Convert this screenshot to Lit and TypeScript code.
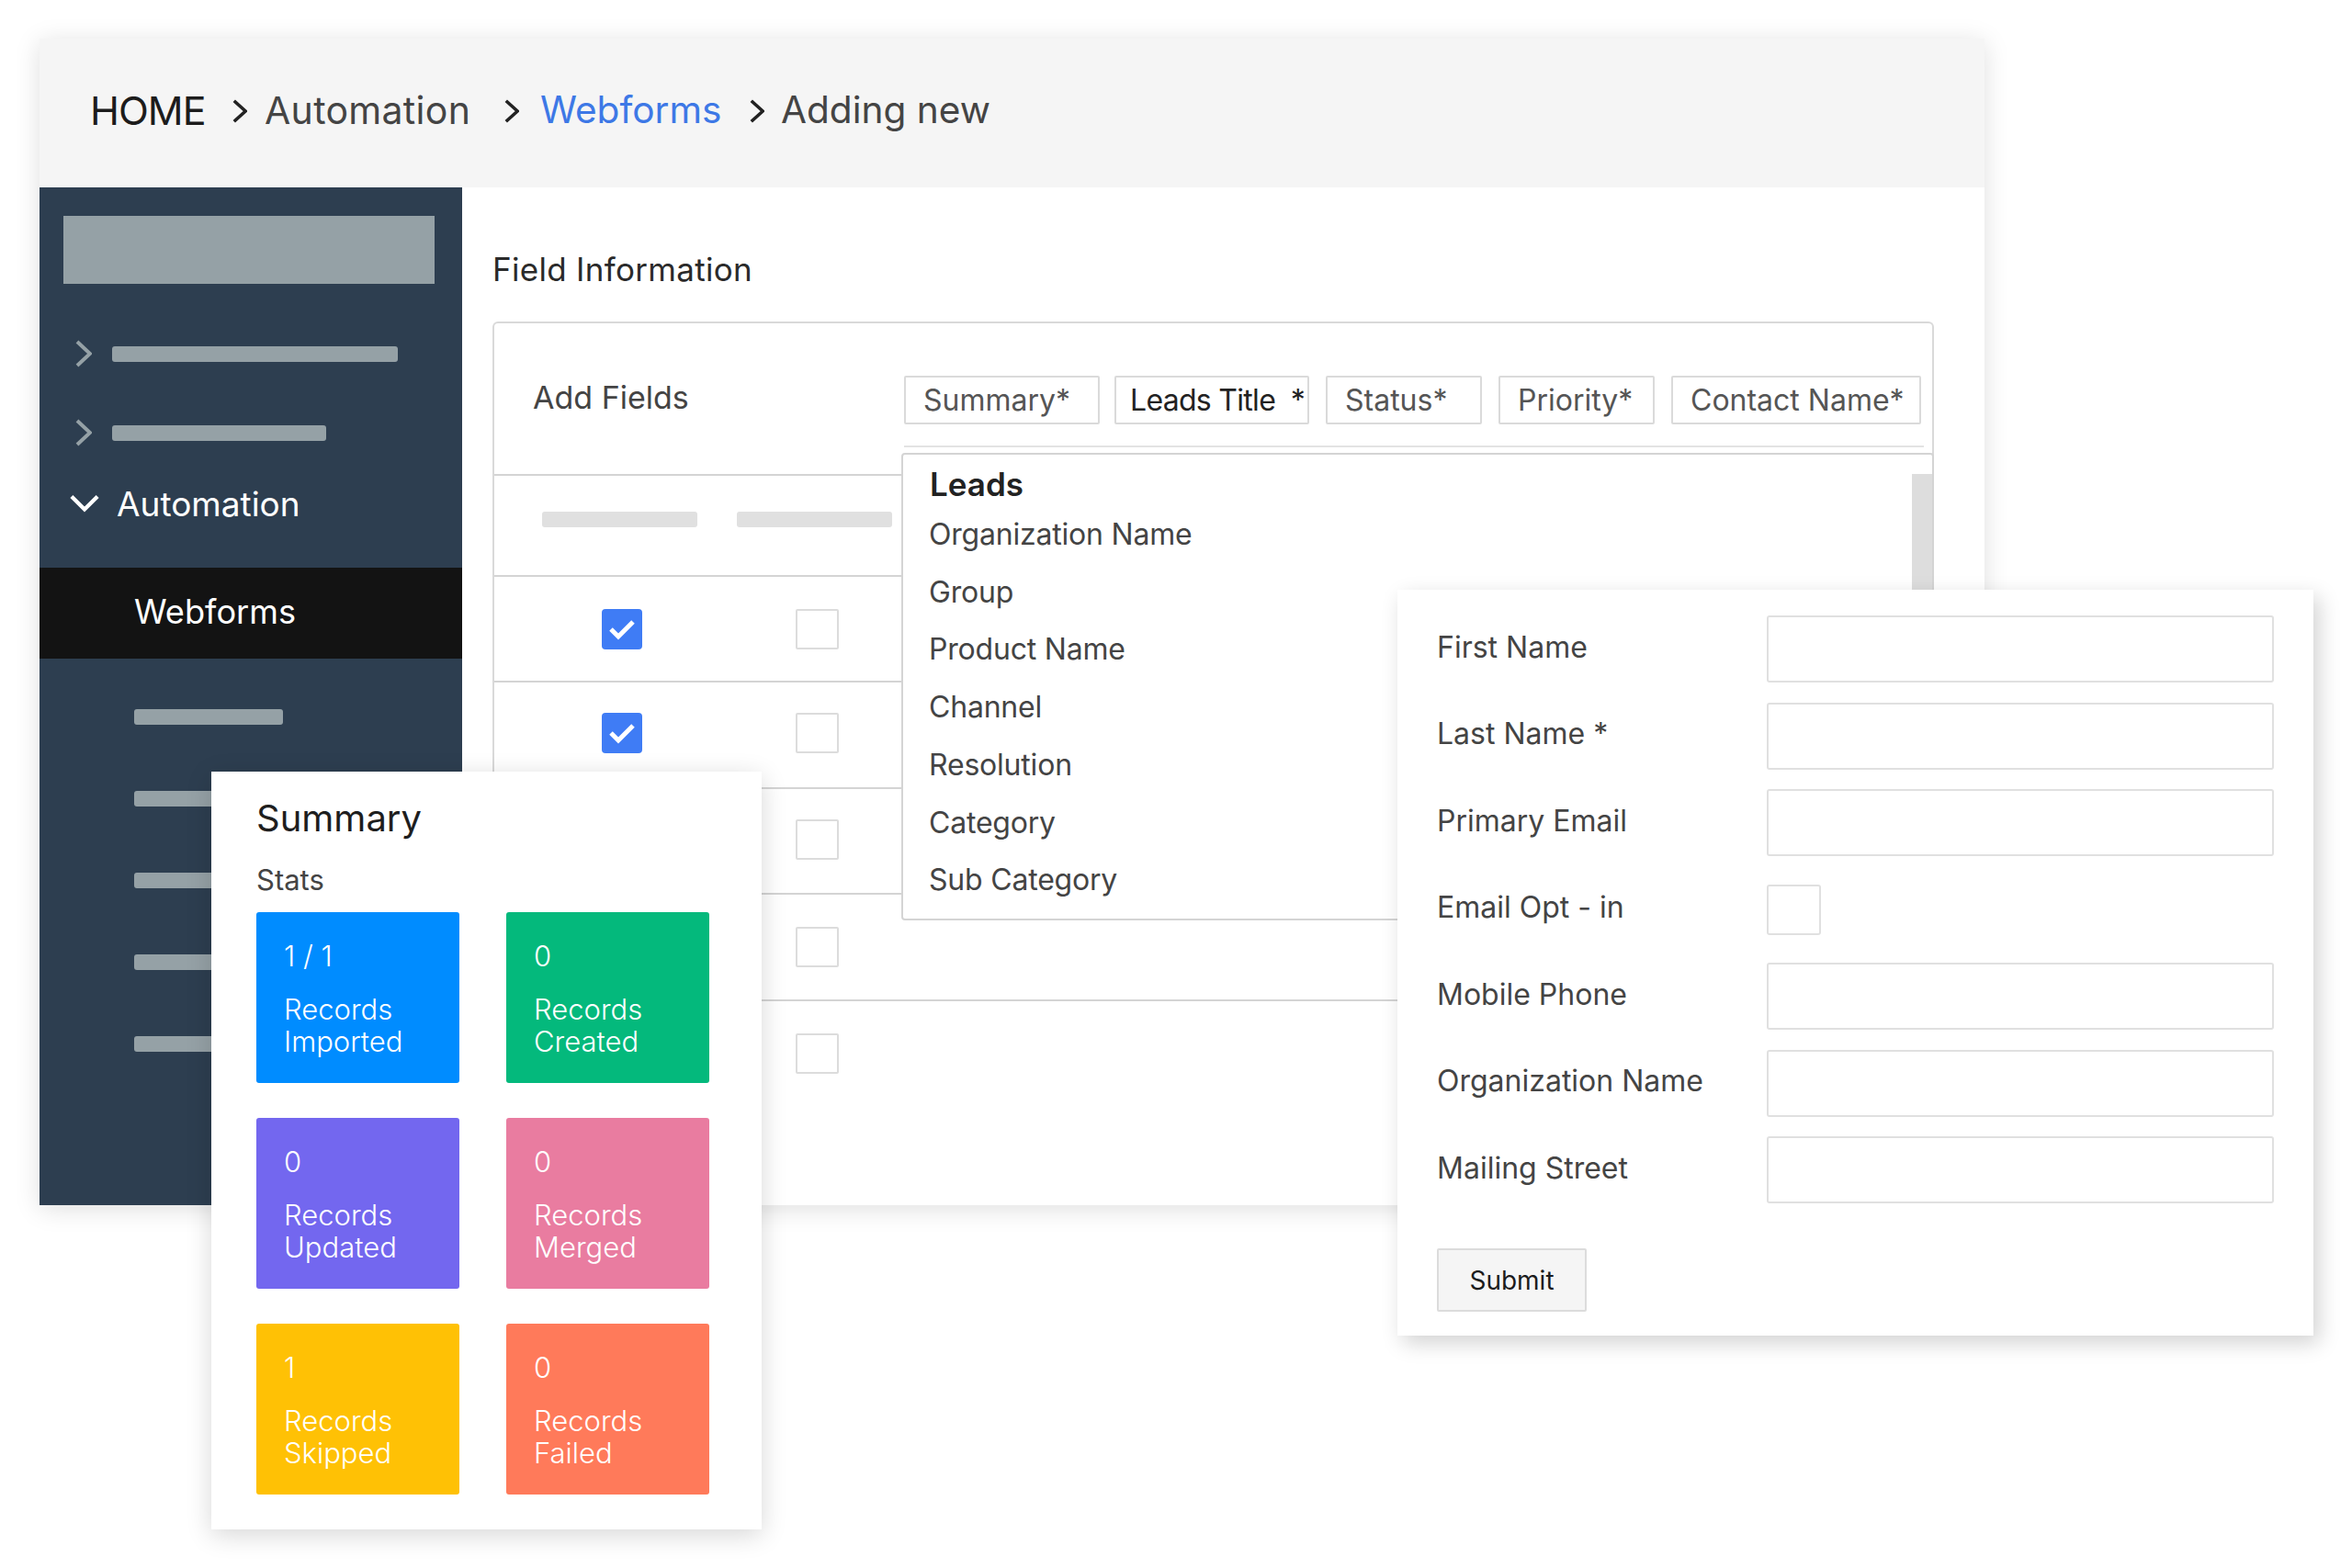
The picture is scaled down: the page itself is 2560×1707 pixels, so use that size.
import { LitElement, html, css, svg } from 'lit';
import { customElement } from 'lit/decorators.js';

const chevronRight = svg`<polyline points="2,2 16,15 2,28" fill="none" stroke="currentColor" stroke-width="4"/>`;
const chevronDown = svg`<polyline points="2,2 17,17 32,2" fill="none" stroke="currentColor" stroke-width="4.5"/>`;

const crumbs = [
  { label: 'HOME', cls: 'home' },
  { label: 'Automation', cls: 'a' },
  { label: 'Webforms', cls: 'w' },
  { label: 'Adding new', cls: 'n' },
];

const chips = [
  { label: 'Summary*', w: 213 },
  { label: 'Leads Title  *', w: 212, dark: true },
  { label: 'Status*', w: 170 },
  { label: 'Priority*', w: 170 },
  { label: 'Contact Name*', w: 272 },
];

const leadFields = ['Organization Name', 'Group', 'Product Name', 'Channel', 'Resolution', 'Category', 'Sub Category'];

const rows = [
  { checked: true, h: 115, pb: 0 },
  { checked: true, h: 116, pb: 5 },
  { checked: false, h: 115, pb: 3 },
  { checked: false, h: 116, pb: 0 },
  { checked: false, h: 125, pb: 10 },
];

const tiles = [
  { value: '1 / 1', a: 'Records', b: 'Imported', color: '#008cff' },
  { value: '0', a: 'Records', b: 'Created', color: '#04b97c' },
  { value: '0', a: 'Records', b: 'Updated', color: '#7367ef' },
  { value: '0', a: 'Records', b: 'Merged', color: '#e97ca0' },
  { value: '1', a: 'Records', b: 'Skipped', color: '#ffc105' },
  { value: '0', a: 'Records', b: 'Failed', color: '#ff7a5a' },
];

const formFields = [
  { label: 'First Name' },
  { label: 'Last Name *' },
  { label: 'Primary Email' },
  { label: 'Email Opt - in', box: true },
  { label: 'Mobile Phone' },
  { label: 'Organization Name' },
  { label: 'Mailing Street' },
];

@customElement('app-root')
export class AppRoot extends LitElement {
  static styles = css`
    :host {
      display: block;
      position: relative;
      width: 2560px;
      height: 1707px;
      overflow: hidden;
      background: #fff;
      font-family: Inter, "Liberation Sans", sans-serif;
      color: #444;
    }

    .window {
      position: absolute;
      left: 43px;
      top: 42px;
      width: 2117px;
      height: 1270px;
      display: flex;
      flex-direction: column;
      background: #fff;
      box-shadow: 0 4px 26px rgba(0, 0, 0, 0.13);
    }

    .crumbs {
      position: relative;
      height: 162px;
      flex: none;
      background: #f5f5f5;
      font-size: 40.6px;
      color: #444;
    }
    .crumb { position: absolute; top: 54px; line-height: 48px; white-space: nowrap; }
    .crumbs svg { position: absolute; top: 66px; width: 16px; height: 26px; color: #222; }
    .home { left: 55px; color: #1c1c1c; font-size: 43px; letter-spacing: -1px; }
    .a { left: 245px; font-size: 41px; letter-spacing: 0.3px; }
    .w { left: 545px; color: #3d78e6; }
    .n { left: 807px; }

    .body { flex: 1; display: flex; min-height: 0; }

    .sidebar {
      width: 460px;
      flex: none;
      background: #2d3e50;
      padding-top: 31px;
      box-sizing: border-box;
      color: #fff;
    }
    .logo { width: 404px; height: 74px; margin-left: 26px; background: #95a1a6; }
    .nav-row {
      display: flex;
      align-items: center;
      height: 30px;
      padding-left: 39px;
      color: #95a1a6;
    }
    .nav-row svg { width: 18px; height: 30px; margin-right: 22px; flex: none; }
    .nav-row.first { margin-top: 61px; }
    .nav-row.second { margin-top: 56px; }
    .bar { height: 17px; border-radius: 3px; background: #95a1a6; }
    .open {
      display: flex;
      align-items: center;
      height: 40px;
      margin-top: 42px;
      padding-left: 33px;
      font-size: 37px;
      color: #fff;
    }
    .open svg { width: 32px; height: 20px; margin-right: 19px; }
    .active {
      height: 99px;
      margin-top: 50px;
      padding-left: 103px;
      line-height: 96px;
      background: #131313;
      font-size: 36.2px;
    }
    .subs { display: flex; flex-direction: column; gap: 72px; padding: 55px 0 0 103px; }
    .subs .bar { width: 162px; }
    .subs .bar.long { width: 200px; }

    .main { flex: 1; padding: 69px 0 0 33px; }
    h2 {
      margin: 0;
      font-size: 35px;
      line-height: 41px;
      font-weight: 400;
      color: #2a2a2a;
      letter-spacing: 0.3px;
    }
    .panel {
      position: relative;
      width: 1569px;
      height: 863px;
      margin-top: 36px;
      box-sizing: border-box;
      border: 2px solid #d9d9d9;
      border-bottom: none;
      border-radius: 6px 6px 0 0;
    }
    .panel-top {
      display: flex;
      height: 166px;
      box-sizing: border-box;
      padding: 57px 0 0 42px;
      border-bottom: 2px solid #d4d4d4;
    }
    .panel-top .title {
      width: 404px;
      flex: none;
      margin-top: 1px;
      font-size: 34px;
      line-height: 46px;
      color: #444;
    }
    .chips {
      display: flex;
      gap: 18px;
      width: 1110px;
      height: 76px;
      border-bottom: 2px solid #e3e3e3;
    }
    .chip {
      height: 53px;
      box-sizing: border-box;
      padding-left: 19px;
      border: 2px solid #dadada;
      border-radius: 2px;
      font-size: 32px;
      line-height: 49px;
      white-space: pre;
      color: #555;
    }
    .chip:first-child { margin-right: -2px; }
    .chip.dark { padding-left: 15px; color: #222; letter-spacing: -0.7px; }

    .col-head { display: flex; gap: 43px; height: 108px; padding: 39px 0 0 52px; box-sizing: border-box; }
    .col-head .bar { width: 169px; background: #e0e0e0; }
    .row {
      display: grid;
      grid-template-columns: 213px 213px;
      align-items: center;
      justify-items: center;
      box-sizing: border-box;
      padding-left: 32px;
      border-top: 2px solid #d4d4d4;
    }
    .row:last-of-type { border-bottom: 2px solid #d4d4d4; }
    .check {
      width: 44px;
      height: 44px;
      border-radius: 4px;
      background: #3f7cf5;
      display: flex;
      align-items: center;
      justify-content: center;
    }
    .check svg { width: 30px; height: 24px; }
    .box {
      width: 47px;
      height: 44px;
      box-sizing: border-box;
      border: 2px solid #dcdcdc;
      border-radius: 2px;
      background: #fff;
    }

    .dropdown {
      position: absolute;
      left: 443px;
      top: 141px;
      width: 1124px;
      height: 509px;
      box-sizing: border-box;
      padding: 10px 0 0 28px;
      background: #fff;
      border: 2px solid #d4d4d4;
      border-radius: 4px;
    }
    .dropdown h3 {
      margin: 0 0 2px 1px;
      font-size: 35px;
      line-height: 44px;
      font-weight: 600;
      color: #222;
    }
    .dropdown div.item {
      font-size: 32px;
      line-height: 62.7px;
      letter-spacing: -0.2px;
      color: #444;
    }
    .scroll {
      position: absolute;
      right: 0;
      top: 21px;
      width: 22px;
      height: 160px;
      background: #ddd;
    }

    .summary {
      position: absolute;
      left: 230px;
      top: 840px;
      width: 599px;
      height: 825px;
      box-sizing: border-box;
      padding: 27px 0 0 49px;
      background: #fff;
      box-shadow: 0 6px 26px rgba(0, 0, 0, 0.16);
    }
    .summary h2 { font-size: 40px; line-height: 48px; color: #1e1e1e; letter-spacing: 0; }
    .stats { margin-top: 24px; font-size: 31px; line-height: 38px; color: #444; }
    .tiles {
      display: grid;
      grid-template-columns: 221px 221px;
      grid-auto-rows: 186px;
      column-gap: 51px;
      row-gap: 38px;
      margin-top: 16px;
    }
    .tile {
      padding: 30px 0 0 30px;
      box-sizing: border-box;
      border-radius: 3px;
      color: #fff;
      font-size: 31px;
      font-weight: 300;
      line-height: 35px;
    }
    .tile .value { margin-bottom: 23px; }

    .form {
      position: absolute;
      left: 1521px;
      top: 642px;
      width: 997px;
      height: 812px;
      box-sizing: border-box;
      padding: 28px 42px 0 43px;
      background: #fff;
      box-shadow: 6px 8px 22px rgba(0, 0, 0, 0.18);
    }
    .field {
      display: grid;
      grid-template-columns: 359px 552px;
      height: 73px;
      margin-bottom: 21.5px;
      align-items: center;
    }
    .field label {
      font-size: 32px;
      line-height: 40px;
      margin-top: -4px;
      color: #444;
    }
    .input {
      height: 73px;
      box-sizing: border-box;
      border: 2px solid #e0e0e0;
      border-radius: 3px;
    }
    .input.small { width: 59px; height: 55px; }
    .submit {
      display: block;
      width: 163px;
      height: 69px;
      margin: 49px 0 0;
      padding: 0;
      box-sizing: border-box;
      background: #f5f5f5;
      border: 2px solid #dcdcdc;
      border-radius: 2px;
      font-family: inherit;
      font-size: 28px;
      color: #1c1c1c;
    }
  `;

  render() {
    const crumbArrows = [210, 506, 773];
    return html`
      <div class="window">
        <div class="crumbs">
          ${crumbs.map(c => html`<span class="crumb ${c.cls}">${c.label}</span>`)}
          ${crumbArrows.map(x => html`<svg viewBox="0 0 18 30" preserveAspectRatio="none" style="left:${x}px">${chevronRight}</svg>`)}
        </div>
        <div class="body">
          <div class="sidebar">
            <div class="logo"></div>
            <div class="nav-row first">
              <svg viewBox="0 0 18 30">${chevronRight}</svg>
              <div class="bar" style="width:311px"></div>
            </div>
            <div class="nav-row second">
              <svg viewBox="0 0 18 30">${chevronRight}</svg>
              <div class="bar" style="width:233px"></div>
            </div>
            <div class="open">
              <svg viewBox="0 0 34 20">${chevronDown}</svg>
              <span>Automation</span>
            </div>
            <div class="active">Webforms</div>
            <div class="subs">
              <div class="bar"></div>
              <div class="bar long"></div>
              <div class="bar long"></div>
              <div class="bar long"></div>
              <div class="bar long"></div>
            </div>
          </div>
          <div class="main">
            <h2>Field Information</h2>
            <div class="panel">
              <div class="panel-top">
                <div class="title">Add Fields</div>
                <div class="chips">
                  ${chips.map(c => html`<div class="chip ${c.dark ? 'dark' : ''}" style="width:${c.w}px">${c.label}</div>`)}
                </div>
              </div>
              <div class="col-head">
                <div class="bar"></div>
                <div class="bar"></div>
              </div>
              ${rows.map(r => html`
                <div class="row" style="height:${r.h}px;padding-bottom:${r.pb}px">
                  ${r.checked
                    ? html`<div class="check"><svg viewBox="0 0 30 24"><polyline points="3,12 11,20 27,4" fill="none" stroke="#fff" stroke-width="5"/></svg></div>`
                    : html`<div class="box"></div>`}
                  <div class="box"></div>
                </div>
              `)}
              <div class="dropdown">
                <h3>Leads</h3>
                ${leadFields.map(f => html`<div class="item">${f}</div>`)}
                <div class="scroll"></div>
              </div>
            </div>
          </div>
        </div>
      </div>

      <div class="summary">
        <h2>Summary</h2>
        <div class="stats">Stats</div>
        <div class="tiles">
          ${tiles.map(t => html`
            <div class="tile" style="background:${t.color}">
              <div class="value">${t.value}</div>
              <div>${t.a}</div>
              <div>${t.b}</div>
            </div>
          `)}
        </div>
      </div>

      <div class="form">
        ${formFields.map(f => html`
          <div class="field">
            <label>${f.label}</label>
            <div class="input ${f.box ? 'small' : ''}"></div>
          </div>
        `)}
        <button class="submit">Submit</button>
      </div>
    `;
  }
}
